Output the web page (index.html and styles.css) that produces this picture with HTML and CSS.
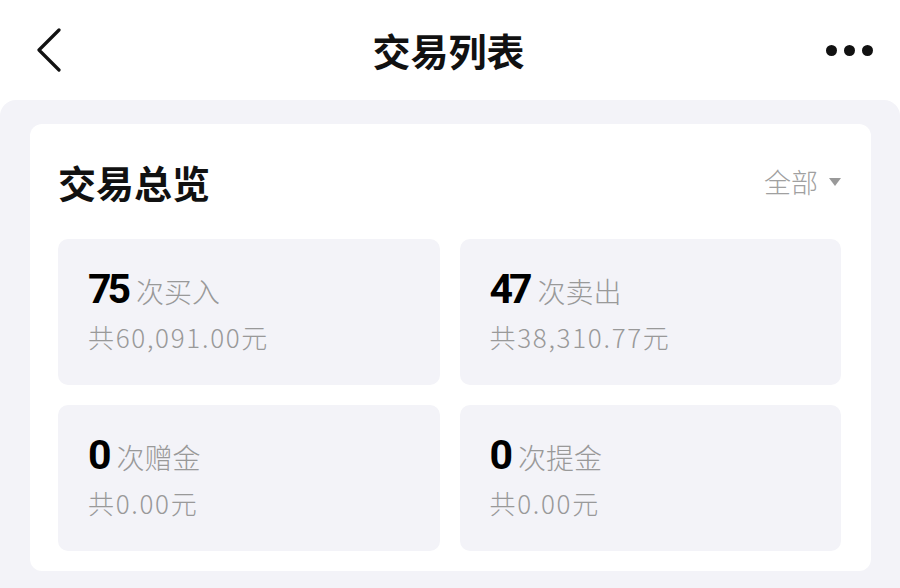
FILE: index.html
```html
<!DOCTYPE html>
<html lang="zh-CN">
<head>
  <meta charset="UTF-8">
  <title>交易列表</title>
  <link rel="stylesheet" href="styles.css">
</head>
<body>
<div class="header">
  <span class="back">
    <svg width="26" height="44" viewBox="0 0 26 44"><path d="M23 2 L3 22 L23 42" fill="none" stroke="#111" stroke-width="3.2" stroke-linecap="round" stroke-linejoin="round"/></svg>
  </span>
  <h1 class="title">交易列表</h1>
  <span class="more"><i></i><i></i><i></i></span>
</div>
<div class="main">
  <div class="card">
    <div class="card-head">
      <h2>交易总览</h2>
      <span class="filter">全部<b class="arrow"></b></span>
    </div>
    <ul class="stats">
      <li>
        <p class="count"><strong>75</strong>次买入</p>
        <p class="sum">共60,091.00元</p>
      </li>
      <li>
        <p class="count"><strong>47</strong>次卖出</p>
        <p class="sum">共38,310.77元</p>
      </li>
      <li>
        <p class="count"><strong>0</strong>次赠金</p>
        <p class="sum">共0.00元</p>
      </li>
      <li>
        <p class="count"><strong>0</strong>次提金</p>
        <p class="sum">共0.00元</p>
      </li>
    </ul>
  </div>
</div>
</body>
</html>
```

FILE: styles.css
```css
* {
  padding: 0;
  margin: 0;
  list-style: none;
  box-sizing: border-box;
}

body {
  width: 900px;
  height: 588px;
  overflow: hidden;
  background: #fff;
  font-family: "Noto Sans CJK SC", "Noto Sans", sans-serif;
  color: #111;
}

.header {
  height: 100px;
  display: flex;
  align-items: center;
  justify-content: space-between;
  padding: 0 27px 0 36px;
}

.back {
  width: 48px;
  display: flex;
}

.title {
  font-size: 38px;
  font-weight: 600;
  line-height: 40px;
}

.more {
  width: 60px;
  display: flex;
  justify-content: flex-end;
  gap: 7px;
}

.more i {
  width: 11px;
  height: 11px;
  border-radius: 50%;
  background: #111;
}

.main {
  height: 488px;
  background: #f3f3f8;
  border-radius: 16px 16px 0 0;
  padding: 24px 29px 0 30px;
}

.card {
  background: #fff;
  border-radius: 12px;
  padding: 0 30px 20px 28px;
}

.card-head {
  height: 115px;
  display: flex;
  align-items: center;
  justify-content: space-between;
}

.card-head h2 {
  font-size: 38px;
  font-weight: 600;
  line-height: 40px;
}

.filter {
  display: flex;
  align-items: center;
  font-size: 27px;
  font-weight: 300;
  color: #a0a0a0;
  line-height: 30px;
}

.arrow {
  width: 0;
  height: 0;
  margin-left: 11px;
  border-left: 6px solid transparent;
  border-right: 6px solid transparent;
  border-top: 8px solid #999;
}

.stats {
  display: grid;
  grid-template-columns: 1fr 1fr;
  gap: 20px;
}

.stats li {
  height: 146px;
  background: #f3f3f8;
  border-radius: 10px;
  padding: 28px 30px 0;
}

.count {
  font-size: 28px;
  font-weight: 300;
  line-height: 44px;
  color: #999;
}

.count strong {
  font-family: Roboto, "Liberation Sans", sans-serif;
  font-size: 41px;
  font-weight: bold;
  letter-spacing: -4px;
  color: #000;
  margin-right: 9px;
}

.sum {
  margin-top: 8px;
  font-size: 26px;
  font-weight: 300;
  letter-spacing: 1.7px;
  line-height: 32px;
  color: #999;
}
```
